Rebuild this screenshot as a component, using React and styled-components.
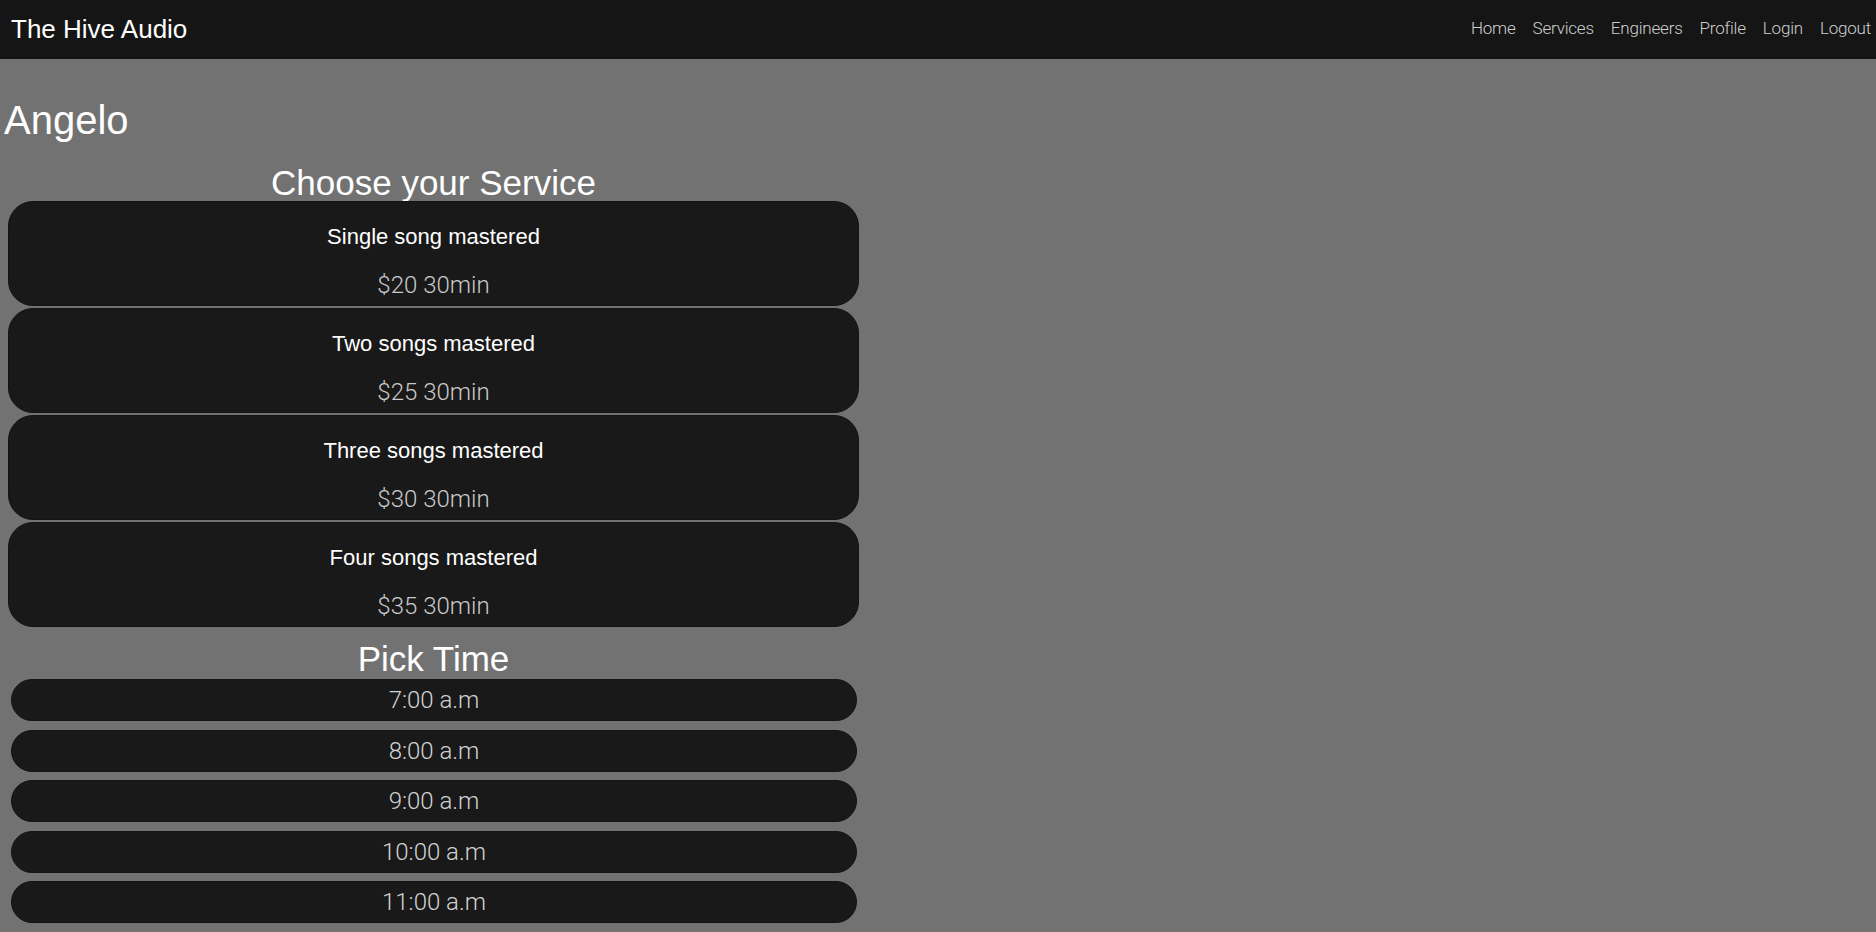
import React from 'react';
import styled, { createGlobalStyle } from 'styled-components';

const GlobalStyle = createGlobalStyle`
  html, body {
    margin: 0;
    padding: 0;
    background: #727272;
    font-family: "Liberation Sans", Arial, sans-serif;
    color: white;
  }
  * {
    box-sizing: border-box;
  }
`;

const NavBar = styled.nav`
  height: 59px;
  background: #151515;
  display: flex;
  align-items: center;
  justify-content: space-between;
  padding: 0 5px 0 11px;
`;

const Brand = styled.div`
  font-size: 26px;
  color: white;
`;

const NavLinks = styled.div`
  display: flex;
  align-items: center;
  gap: 17px;
  padding-bottom: 4px;
`;

const NavLink = styled.a`
  font-family: Roboto, "Liberation Sans", sans-serif;
  font-weight: 300;
  font-size: 17px;
  letter-spacing: -0.2px;
  color: #cfcfcf;
  text-decoration: none;
  cursor: pointer;
`;

const Main = styled.main`
  padding: 39px 0 0 4px;
`;

const EngineerName = styled.h1`
  margin: 0 0 21px 0;
  font-size: 40px;
  font-weight: 400;
`;

const Column = styled.div`
  width: 855px;
  padding-left: 4px;
`;

const SectionTitle = styled.h2`
  margin: ${props => props.top || 0}px 0 ${props => props.bottom || 0}px 0;
  font-size: 35px;
  line-height: 37px;
  font-weight: 400;
  text-align: center;
`;

const ServiceList = styled.div`
  display: flex;
  flex-direction: column;
  gap: 2px;
`;

const ServiceCard = styled.div`
  height: 105px;
  background: #191919;
  border: 1px solid #141414;
  border-radius: 25px;
  padding: 21.5px 0 0;
  text-align: center;
  cursor: pointer;
`;

const ServiceName = styled.div`
  font-size: 22px;
  color: white;
  margin-bottom: 21.5px;
`;

const ServicePrice = styled.div`
  font-family: Roboto, "Liberation Sans", sans-serif;
  font-weight: 300;
  font-size: 24px;
  color: #c9c9c9;
`;

const TimeList = styled.div`
  display: flex;
  flex-direction: column;
  gap: 8.5px;
  padding: 0 2px 0 3px;
`;

const TimeSlot = styled.button`
  height: 42px;
  width: 100%;
  background: #191919;
  border: 1px solid #141414;
  border-radius: 21px;
  font-family: Roboto, "Liberation Sans", sans-serif;
  font-weight: 300;
  font-size: 24px;
  color: #d2d2d2;
  display: flex;
  align-items: center;
  justify-content: center;
  padding: 0;
  cursor: pointer;
`;

const links = ['Home', 'Services', 'Engineers', 'Profile', 'Login', 'Logout'];

const services = [
  { name: 'Single song mastered', price: '$20', length: '30min' },
  { name: 'Two songs mastered', price: '$25', length: '30min' },
  { name: 'Three songs mastered', price: '$30', length: '30min' },
  { name: 'Four songs mastered', price: '$35', length: '30min' },
];

const times = ['7:00 a.m', '8:00 a.m', '9:00 a.m', '10:00 a.m', '11:00 a.m', '12:00 p.m', '1:00 p.m'];

export default function App() {
  return (
    <>
      <GlobalStyle />
      <NavBar>
        <Brand>The Hive Audio</Brand>
        <NavLinks>
          {links.map(link => (
            <NavLink key={link}>{link}</NavLink>
          ))}
        </NavLinks>
      </NavBar>
      <Main>
        <EngineerName>Angelo</EngineerName>
        <Column>
          <SectionTitle>Choose your Service</SectionTitle>
          <ServiceList>
            {services.map(service => (
              <ServiceCard key={service.name}>
                <ServiceName>{service.name}</ServiceName>
                <ServicePrice>
                  {service.price} {service.length}
                </ServicePrice>
              </ServiceCard>
            ))}
          </ServiceList>
          <SectionTitle top={13} bottom={2}>Pick Time</SectionTitle>
          <TimeList>
            {times.map(time => (
              <TimeSlot key={time}>{time}</TimeSlot>
            ))}
          </TimeList>
        </Column>
      </Main>
    </>
  );
}
